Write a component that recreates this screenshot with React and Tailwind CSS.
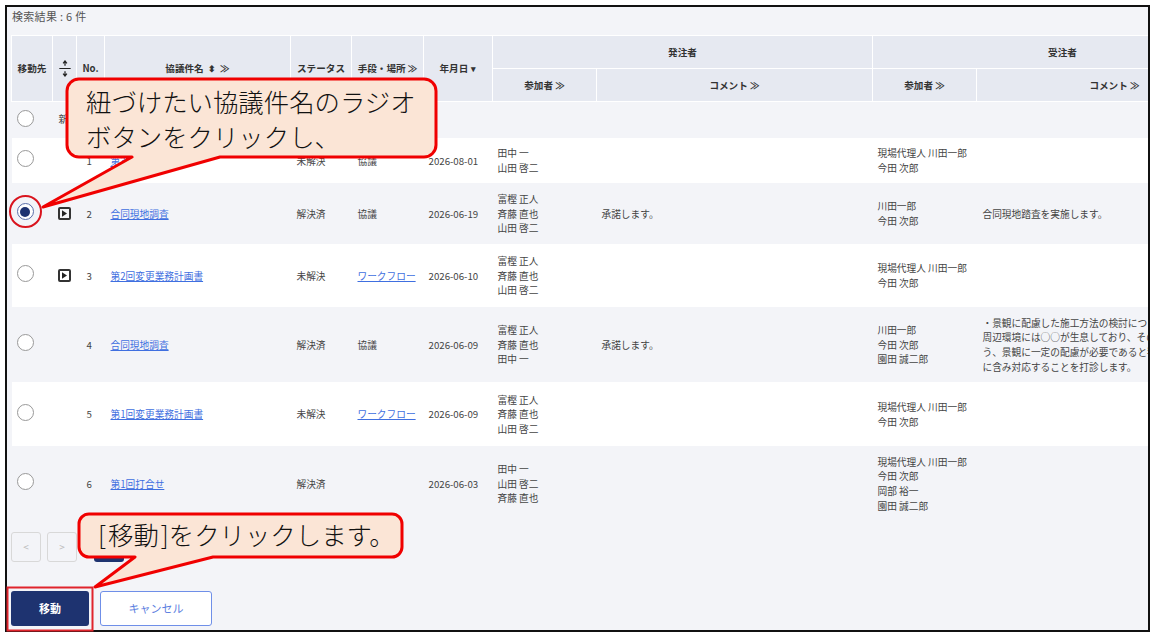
import React from 'react';

const font = { fontFamily: '"Noto Sans CJK JP", "Noto Sans", sans-serif' };

const rows = [
  { no: 1, title: '第3回打合せ', status: '未解決', means: '協議', date: '2026-08-01', h: 'h-[45px]', orderer: ['田中 一', '山田 啓二'], contractor: ['現場代理人 川田一郎', '今田 次郎'] },
  { no: 2, title: '合同現地調査', status: '解決済', means: '協議', date: '2026-06-19', h: 'h-[61px]', orderer: ['富樫 正人', '斉藤 直也', '山田 啓二'], ordererComment: '承諾します。', contractor: ['川田一郎', '今田 次郎'], contractorComment: ['合同現地踏査を実施します。'], expand: true, checked: true },
  { no: 3, title: '第2回変更業務計画書', status: '未解決', means: 'ワークフロー', meansLink: true, date: '2026-06-10', h: 'h-[63px]', orderer: ['富樫 正人', '斉藤 直也', '山田 啓二'], contractor: ['現場代理人 川田一郎', '今田 次郎'], expand: true },
  { no: 4, title: '合同現地調査', status: '解決済', means: '協議', date: '2026-06-09', h: 'h-[75px]', orderer: ['富樫 正人', '斉藤 直也', '田中 一'], ordererComment: '承諾します。', contractor: ['川田一郎', '今田 次郎', '園田 誠二郎'], contractorComment: ['・景観に配慮した施工方法の検討について、', '周辺環境には○○が生息しており、その保全を行', 'う、景観に一定の配慮が必要であると判断し', 'に含み対応することを打診します。'] },
  { no: 5, title: '第1回変更業務計画書', status: '未解決', means: 'ワークフロー', meansLink: true, date: '2026-06-09', h: 'h-[64px]', orderer: ['富樫 正人', '斉藤 直也', '山田 啓二'], contractor: ['現場代理人 川田一郎', '今田 次郎'] },
  { no: 6, title: '第1回打合せ', status: '解決済', means: '', date: '2026-06-03', h: 'h-[75px]', orderer: ['田中 一', '山田 啓二', '斉藤 直也'], contractor: ['現場代理人 川田一郎', '今田 次郎', '岡部 裕一', '園田 誠二郎'] },
];

const Radio = ({ checked }) => (
  <span className={`-mt-[3px] ml-[5px] flex h-[17px] w-[17px] items-center justify-center rounded-full border bg-white ${checked ? 'border-[#5a6ea8]' : 'border-[#999999]'}`}>
    {checked && <span className="h-[10px] w-[10px] rounded-full bg-[#1e3370]" />}
  </span>
);

const Lines = ({ items }) => (
  <div>
    {items.map((line) => (
      <div key={line} className="whitespace-nowrap">{line}</div>
    ))}
  </div>
);

const Th = ({ children, className = '', ...props }) => (
  <th className={`border border-white bg-[#e6e9f1] p-0 text-center text-[9.6px] font-bold text-[#333333] ${className}`} {...props}>
    {children}
  </th>
);

const App = () => {
  return (
    <div className="relative h-[635px] w-[1153px] overflow-hidden bg-white" style={font}>
      <div className="ml-[5px] mt-[5px] h-[627px] w-[1145px] overflow-hidden border-2 border-[#111111] bg-[#f3f4f8] pl-[4px]">
        <div className="h-[28px] pl-[1px] pt-[1px] text-[11px] leading-[16px] tracking-[0.3px] text-[#555555]">検索結果 : 6 件</div>

        <table className="w-[1241px] table-fixed border-collapse text-[9.7px] leading-[14.6px] text-[#444444]">
          <colgroup>
            <col className="w-[41px]" />
            <col className="w-[24px]" />
            <col className="w-[28px]" />
            <col className="w-[186px]" />
            <col className="w-[61px]" />
            <col className="w-[72px]" />
            <col className="w-[69px]" />
            <col className="w-[104px]" />
            <col className="w-[276px]" />
            <col className="w-[104px]" />
            <col className="w-[276px]" />
          </colgroup>
          <thead>
            <tr className="h-[33px]">
              <Th rowSpan={2}>移動先</Th>
              <Th rowSpan={2}>
                <svg viewBox="0 0 14 18" className="mx-auto h-[17px] w-[14px]" fill="none" stroke="#222222" strokeWidth="1.3">
                  <path d="M1 9h12M7 1v5M5 3.5 7 1l2 2.5M7 17v-5M5 14.5 7 17l2-2.5" />
                </svg>
              </Th>
              <Th rowSpan={2}>No.</Th>
              <Th rowSpan={2}>協議件名 <span className="mx-[2px] text-[9px]">⬍</span> ≫</Th>
              <Th rowSpan={2}>ステータス</Th>
              <Th rowSpan={2}>手段・場所 ≫</Th>
              <Th rowSpan={2}>年月日 <span className="ml-[1px] text-[9px]">▾</span></Th>
              <Th colSpan={2}>発注者</Th>
              <Th colSpan={2}>受注者</Th>
            </tr>
            <tr className="h-[33px]">
              <Th>参加者 ≫</Th>
              <Th>コメント ≫</Th>
              <Th>参加者 ≫</Th>
              <Th>コメント ≫</Th>
            </tr>
          </thead>
          <tbody>
            <tr className="h-[36px]">
              <td className="p-0"><Radio /></td>
              <td colSpan={10} className="pl-[6px]">新規</td>
            </tr>
            {rows.map((row, i) => (
              <tr key={row.no} className={`${row.h} ${i % 2 === 0 ? 'bg-white' : 'bg-[#f3f4f8]'}`}>
                <td className="p-0"><Radio checked={row.checked} /></td>
                <td className="p-0">
                  {row.expand && (
                    <span className="mx-auto flex h-[13px] w-[13px] items-center justify-center rounded-[2px] border-2 border-[#333333]">
                      <svg viewBox="0 0 6 8" className="h-[7px] w-[5px]" fill="#222222"><path d="M0 0l6 4-6 4z" /></svg>
                    </span>
                  )}
                </td>
                <td className="p-0 pl-[10px] pt-[2px]">{row.no}</td>
                <td className="pl-[6px] pt-[2px]"><a href="#" className="text-[#3f6fe0] underline">{row.title}</a></td>
                <td className="pl-[6px] pt-[2px]">{row.status}</td>
                <td className="pl-[6px] pt-[2px]">
                  {row.meansLink ? <a href="#" className="text-[#3f6fe0] underline">{row.means}</a> : row.means}
                </td>
                <td className="pl-[5px] pt-[2px]">{row.date}</td>
                <td className="pl-[5px] pt-[2px]"><Lines items={row.orderer} /></td>
                <td className="pl-[5px] pt-[2px]">{row.ordererComment}</td>
                <td className="pl-[5px] pt-[2px]"><Lines items={row.contractor} /></td>
                <td className="pl-[6px] pt-[2px]">{row.contractorComment && <Lines items={row.contractorComment} />}</td>
              </tr>
            ))}
          </tbody>
        </table>

        <div className="mt-[11px] flex gap-[6px] text-[10px] text-[#bbbbbb]">
          <button className="h-[30px] w-[30px] rounded-[3px] border border-[#d8d8d8]">&lt;</button>
          <button className="h-[30px] w-[30px] rounded-[3px] border border-[#d8d8d8]">&gt;</button>
          <button className="ml-[11px] h-[30px] w-[30px] rounded-[3px] bg-[#1e3370] text-white">1</button>
        </div>

        <div className="mt-[29px] flex gap-[11px] text-[11px]">
          <button className="h-[35px] w-[78px] rounded-[3px] bg-[#1e3370] font-bold text-white">移動</button>
          <button className="h-[35px] w-[112px] rounded-[3px] border border-[#6f8fe8] bg-white text-[#5c80e0]">キャンセル</button>
        </div>
      </div>

      {/* annotations drawn over the screenshot */}
      <svg className="absolute left-0 top-0 h-[635px] w-[1153px]" viewBox="0 0 1153 635" fill="none">
        <circle cx="25.5" cy="211.5" r="15.5" stroke="#d9141e" strokeWidth="2" />
        <rect x="7.5" y="587.5" width="85" height="43" stroke="#e0242c" strokeWidth="2" />
        <path d="M79 79H424a12 12 0 0 1 12 12V145a12 12 0 0 1-12 12H220L43 207 132 157H79a12 12 0 0 1-12-12V91a12 12 0 0 1 12-12Z" fill="#fbe5d6" stroke="#f00000" strokeWidth="3" strokeLinejoin="round" />
        <path d="M89 514H392a10 10 0 0 1 10 10V547a10 10 0 0 1-10 10H213L95 587 135 557H89a10 10 0 0 1-10-10V524a10 10 0 0 1 10-10Z" fill="#fbe5d6" stroke="#f00000" strokeWidth="3" strokeLinejoin="round" />
      </svg>
      <div className="absolute left-[86px] top-[84px] text-[25.4px] font-light leading-[35px] text-[#111111]">
        <div>紐づけたい協議件名のラジオ</div>
        <div>ボタンをクリックし、</div>
      </div>
      <div className="absolute left-[98px] top-[517px] text-[25.4px] font-light leading-[35px] text-[#111111]">
        <span className="mr-[2px]">[</span>移動<span className="ml-[2px]">]</span>をクリックします。
      </div>
    </div>
  );
};

export default App;
